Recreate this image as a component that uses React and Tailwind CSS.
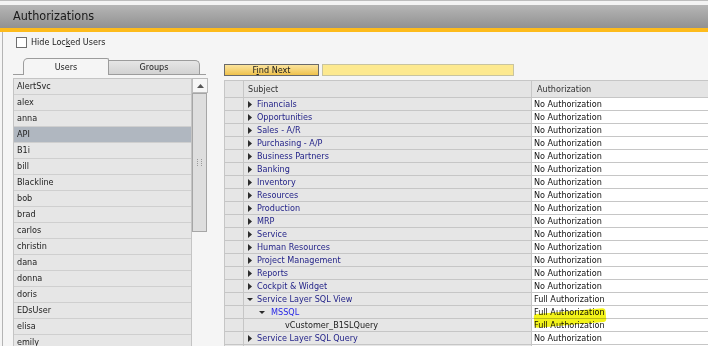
import React from "react";

const users = ["AlertSvc","alex","anna","API","B1i","bill","Blackline","bob","brad","carlos","christin","dana","donna","doris","EDsUser","elisa","emily"];

const rows = [
  { t: "Financials", a: "No Authorization" },
  { t: "Opportunities", a: "No Authorization" },
  { t: "Sales - A/R", a: "No Authorization" },
  { t: "Purchasing - A/P", a: "No Authorization" },
  { t: "Business Partners", a: "No Authorization" },
  { t: "Banking", a: "No Authorization" },
  { t: "Inventory", a: "No Authorization" },
  { t: "Resources", a: "No Authorization" },
  { t: "Production", a: "No Authorization" },
  { t: "MRP", a: "No Authorization" },
  { t: "Service", a: "No Authorization" },
  { t: "Human Resources", a: "No Authorization" },
  { t: "Project Management", a: "No Authorization" },
  { t: "Reports", a: "No Authorization" },
  { t: "Cockpit & Widget", a: "No Authorization" },
  { t: "Service Layer SQL View", a: "Full Authorization", kind: "open0" },
  { t: "MSSQL", a: "Full Authorization", kind: "open1" },
  { t: "vCustomer_B1SLQuery", a: "Full Authorization", kind: "leaf2" },
  { t: "Service Layer SQL Query", a: "No Authorization" },
  { t: "", a: "", kind: "empty" },
];

function RightArrow() {
  return (
    <svg width="4" height="7" viewBox="0 0 4 7" className="block">
      <polygon points="0,0 4,3.5 0,7" fill="#2b2b2b" />
    </svg>
  );
}
function DownArrow() {
  return (
    <svg width="6" height="3" viewBox="0 0 6 3" className="block">
      <polygon points="0,0 6,0 3,3" fill="#2b2b2b" />
    </svg>
  );
}

function SubjectCell({ r }) {
  if (r.kind === "empty") return null;
  if (r.kind === "open0") {
    return (
      <div className="flex items-center pl-[3px]">
        <div className="w-[10px] flex items-center"><DownArrow /></div>
        <span className="text-[#1e1e86]">{r.t}</span>
      </div>
    );
  }
  if (r.kind === "open1") {
    return (
      <div className="flex items-center pl-[15px]">
        <div className="w-[12px] flex items-center"><DownArrow /></div>
        <span className="text-[#2626e6]">{r.t}</span>
      </div>
    );
  }
  if (r.kind === "leaf2") {
    return (
      <div className="flex items-center pl-[41px]">
        <span className="text-[#1c1c1c]">{r.t}</span>
      </div>
    );
  }
  return (
    <div className="flex items-center pl-[4px]">
      <div className="w-[9px] flex items-center"><RightArrow /></div>
      <span className="text-[#1e1e86]">{r.t}</span>
    </div>
  );
}

export default function App() {
  return (
    <div className="w-[708px] h-[346px] overflow-hidden bg-[#f5f5f5] text-[9px] text-[#1c1c1c] font-['DejaVu_Sans_Condensed','Liberation_Sans',sans-serif] flex flex-col">
      {/* top frame */}
      <div className="h-[5px] shrink-0 border-t border-[#bdbdbd] bg-[#f3f3f3]" />
      {/* title bar */}
      <div className="h-[23px] shrink-0 bg-gradient-to-b from-[#b6b6b6] to-[#919191] flex items-center pl-[13px]">
        <span className="text-[12.5px] text-[#1a1a1a] leading-none">Authorizations</span>
      </div>
      <div className="h-[4px] shrink-0 bg-[#fdbb1c]" />
      {/* body */}
      <div className="flex flex-1 min-h-0">
        {/* left column */}
        <div className="ml-[2px] w-[222px] border-l border-[#b4b4b4] flex flex-col">
          <div className="mt-[5px] ml-[13px] flex items-center h-[12px]">
            <div className="w-[11px] h-[11px] bg-white border border-[#6e6e6e]" />
            <span className="ml-[4px] leading-none">Hide Loc<span className="underline">k</span>ed Users</span>
          </div>
          {/* tabs */}
          <div className="mt-[10px] ml-[10px] w-[193px] h-[17px] flex items-end border-b border-[#9c9c9c] pl-[10px]">
            <div className="relative -mb-px w-[86px] h-[17px] bg-[#f5f5f5] border-t border-l border-r border-[#9c9c9c] rounded-tl-[5px] rounded-tr-[2px] flex items-center justify-center">
              <span className="leading-none">Users</span>
            </div>
            <div className="w-[91px] h-[14px] bg-gradient-to-b from-[#e6e6e6] to-[#d2d2d2] border-t border-r border-[#9c9c9c] rounded-tr-[5px] flex items-center justify-center">
              <span className="leading-none">Groups</span>
            </div>
          </div>
          {/* list + scrollbar */}
          <div className="mt-[3px] ml-[10px] flex">
            <div className="w-[179px] border-l border-t border-r border-[#c4c4c4]">
              {users.map((u) => (
                <div
                  key={u}
                  className={`h-[16px] border-b border-[#cfcfcf] pl-[3px] flex items-center ${u === "API" ? "bg-[#b0b7c0]" : "bg-[#e6e6e6]"}`}
                >
                  <span className="leading-none">{u}</span>
                </div>
              ))}
            </div>
            <div className="w-[16px] flex flex-col">
              <div className="h-[15px] w-[16px] border border-[#bcbcbc] bg-[#f6f6f6] flex items-center justify-center">
                <svg width="7" height="4" viewBox="0 0 7 4"><polygon points="0,4 7,4 3.5,0" fill="#555" /></svg>
              </div>
              <div className="h-[139px] w-[15px] bg-[#dedede] border border-[#a6a6a6] flex items-center justify-center">
                <svg width="6" height="8" viewBox="0 0 6 8">
                  <rect x="0" y="0" width="1" height="1" fill="#9a9a9a" />
                  <rect x="4" y="0" width="1" height="1" fill="#9a9a9a" />
                  <rect x="0" y="2" width="1" height="1" fill="#9a9a9a" />
                  <rect x="4" y="2" width="1" height="1" fill="#9a9a9a" />
                  <rect x="0" y="4" width="1" height="1" fill="#9a9a9a" />
                  <rect x="4" y="4" width="1" height="1" fill="#9a9a9a" />
                  <rect x="0" y="6" width="1" height="1" fill="#9a9a9a" />
                  <rect x="4" y="6" width="1" height="1" fill="#9a9a9a" />
                </svg>
              </div>
            </div>
          </div>
        </div>
        {/* right column */}
        <div className="flex-1 flex flex-col pt-[32px]">
          <div className="flex items-center gap-[3px] h-[12px]">
            <div className="w-[95px] h-[12px] border border-[#6a6a6a] bg-gradient-to-b from-[#fbe49c] to-[#efc24a] flex items-center justify-center">
              <span className="leading-none text-[#1a1a1a]">F<span className="underline">i</span>nd Next</span>
            </div>
            <div className="w-[192px] h-[12px] border border-[#c8c4a0] bg-[#fde98f]" />
          </div>
          <div className="relative mt-[4px] border-t border-l border-[#c6c6c6]">
            {/* header */}
            <div className="flex h-[17px] border-b border-[#c6c6c6] bg-[#e4e4e4]">
              <div className="w-[19px] border-r border-[#c6c6c6]" />
              <div className="w-[288px] border-r border-[#c6c6c6] pl-[4px] flex items-center">
                <span className="leading-none text-[#333]">Subject</span>
              </div>
              <div className="flex-1 pl-[5px] flex items-center">
                <span className="leading-none text-[#333]">Authorization</span>
              </div>
            </div>
            {rows.map((r, i) => (
              <div key={i} className="flex h-[13px] border-b border-[#c6c6c6]">
                <div className="w-[19px] border-r border-[#c6c6c6] bg-[#e6e6e6]" />
                <div className="w-[288px] border-r border-[#c6c6c6] bg-[#e6e6e6] flex items-center leading-none">
                  <SubjectCell r={r} />
                </div>
                <div className="flex-1 bg-white pl-[2px] flex items-center">
                  <span className="leading-none text-[#111]">{r.a}</span>
                </div>
              </div>
            ))}
            {/* highlighter stroke */}
            <div className="absolute left-[309px] top-[230px] w-[72px] h-[14px] bg-[#f2f200] opacity-90 mix-blend-multiply rounded-[3px] -rotate-[5deg]" />
          </div>
        </div>
      </div>
    </div>
  );
}
